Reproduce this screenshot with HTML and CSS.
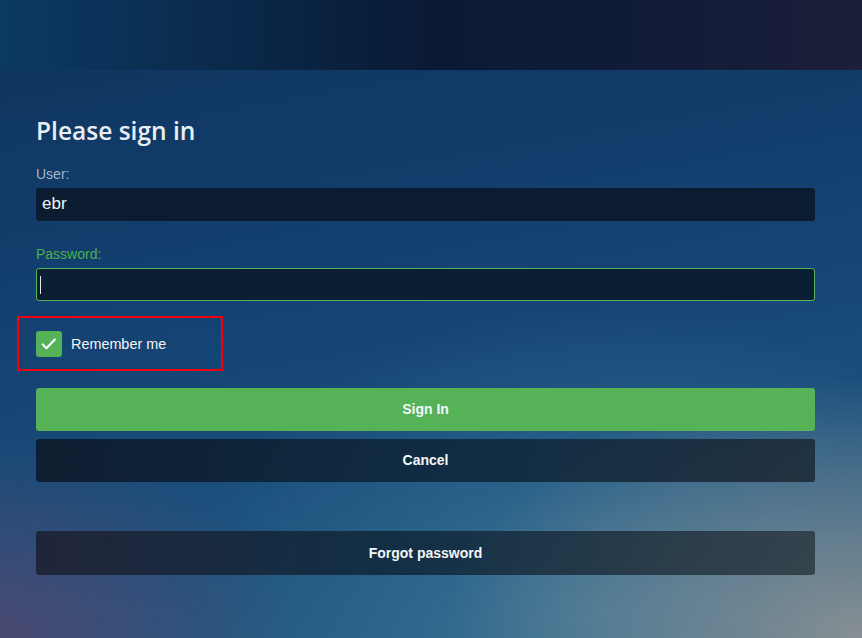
FILE: index.html
```html
<!DOCTYPE html>
<html lang="en">
<head>
  <meta charset="UTF-8">
  <meta name="viewport" content="width=device-width, initial-scale=1.0">
  <title>Sign in</title>
  <link rel="stylesheet" href="styles.css">
</head>
<body>

  <!-- Top bar -->
  <header class="top-bar"></header>

  <!-- Login form -->
  <main class="page">
    <form class="login" onsubmit="return false">
      <h1>Please sign in</h1>

      <div class="field">
        <label for="user">User:</label>
        <input id="user" type="text" value="ebr">
      </div>

      <div class="field focused">
        <label for="password">Password:</label>
        <div class="input-box">
          <input id="password" type="password">
          <span class="caret"></span>
        </div>
      </div>

      <div class="remember">
        <label class="check">
          <span class="box">
            <svg viewBox="0 0 24 24" width="20" height="20" aria-hidden="true">
              <path d="M4.5 12.5l4.5 4.5 10-10.5" fill="none" stroke="#fff" stroke-width="2.6" stroke-linecap="round" stroke-linejoin="round"/>
            </svg>
          </span>
          Remember me
        </label>
      </div>

      <div class="actions">
        <button class="btn primary">Sign In</button>
        <button class="btn dark">Cancel</button>
      </div>

      <button class="btn dark forgot">Forgot password</button>
    </form>
  </main>

</body>
</html>
```

FILE: styles.css
```css
:root {
  --green: #55b257;
  --green-text: #4caf50;
  --field-bg: #0b1c30;
  --text: #f2f4f6;
  --muted: #a9b6c4;
  --radius: 3px;
}

*, *::before, *::after {
  margin: 0; padding: 0; box-sizing: border-box;
}
html, body {
  height: 100%;
}
body {
  font-family: "Liberation Sans", Arial, sans-serif;
  color: var(--text);
  background: #12395f;
  display: flex;
  flex-direction: column;
}

.top-bar {
  height: 70px;
  flex: none;
  background: linear-gradient(90deg, #0c3a63 0%, #0a2747 30%, #0a1a34 50%, #111c38 75%, #1c1f3a 100%);
}

.page {
  flex: 1;
  padding: 49px 47px 0 36px;
  background:
    radial-gradient(ellipse 420px 260px at 100% 100%, rgba(150, 150, 148, 0.85), rgba(150, 150, 148, 0) 100%),
    radial-gradient(ellipse 300px 200px at 0% 100%, rgba(80, 70, 110, 0.85), rgba(80, 70, 110, 0) 100%),
    radial-gradient(ellipse 420px 300px at 70% 95%, rgba(70, 130, 160, 0.6), rgba(70, 130, 160, 0) 100%),
    linear-gradient(170deg, #0f3660 0%, #134070 35%, #1a4f7c 65%, #255f86 100%);
}

.login h1 {
  font-family: "Open Sans", "Noto Sans", sans-serif;
  font-size: 24.5px;
  font-weight: 600;
  color: #e8eef3;
  line-height: 1;
  margin-bottom: 22px;
}

.field {
  display: flex;
  flex-direction: column;
  margin-bottom: 25px;
}
.field label {
  font-size: 14px;
  color: var(--muted);
  line-height: 16px;
  margin-bottom: 6px;
}
.field input {
  height: 33px;
  width: 100%;
  border: 1px solid transparent;
  border-radius: var(--radius);
  background: var(--field-bg);
  color: var(--text);
  font-family: inherit;
  font-size: 17px;
  padding: 0 5px;
  outline: none;
}
.field.focused label {
  color: var(--green-text);
}
.field.focused input {
  border-color: var(--green);
  background: #0c1e33;
}
.input-box {
  position: relative;
}
.caret {
  position: absolute;
  left: 4px;
  top: 8px;
  width: 1px;
  height: 18px;
  background: #e6e6e6;
}

.remember {
  position: relative;
  margin-top: -25px;
  padding: 30px 0 27px;
}
.remember::after {
  content: "";
  position: absolute;
  left: -19px;
  top: 15px;
  width: 206px;
  height: 55px;
  border: 2px solid #f00010;
  pointer-events: none;
}
.check {
  display: flex;
  align-items: center;
  gap: 9px;
  font-size: 14.4px;
  color: var(--text);
}
.box {
  width: 26px;
  height: 26px;
  border-radius: 3px;
  background: var(--green);
  display: flex;
  align-items: center;
  justify-content: center;
}

.actions {
  display: flex;
  flex-direction: column;
  gap: 8px;
  margin-top: 4px;
  margin-bottom: 49px;
}
.btn {
  width: 100%;
  height: 43px;
  border: none;
  border-radius: var(--radius);
  font-family: inherit;
  font-size: 14px;
  font-weight: bold;
  color: #f4f6f8;
  cursor: pointer;
}
.btn.primary {
  background: var(--green);
}
.btn.dark {
  background: linear-gradient(90deg, rgba(14, 26, 42, 0.9), rgba(12, 36, 56, 0.85) 55%, rgba(28, 40, 52, 0.85));
}
.btn.forgot {
  height: 44px;
  background: linear-gradient(90deg, rgba(30, 34, 52, 0.92), rgba(14, 38, 58, 0.85) 45%, rgba(44, 56, 64, 0.85));
}
```
